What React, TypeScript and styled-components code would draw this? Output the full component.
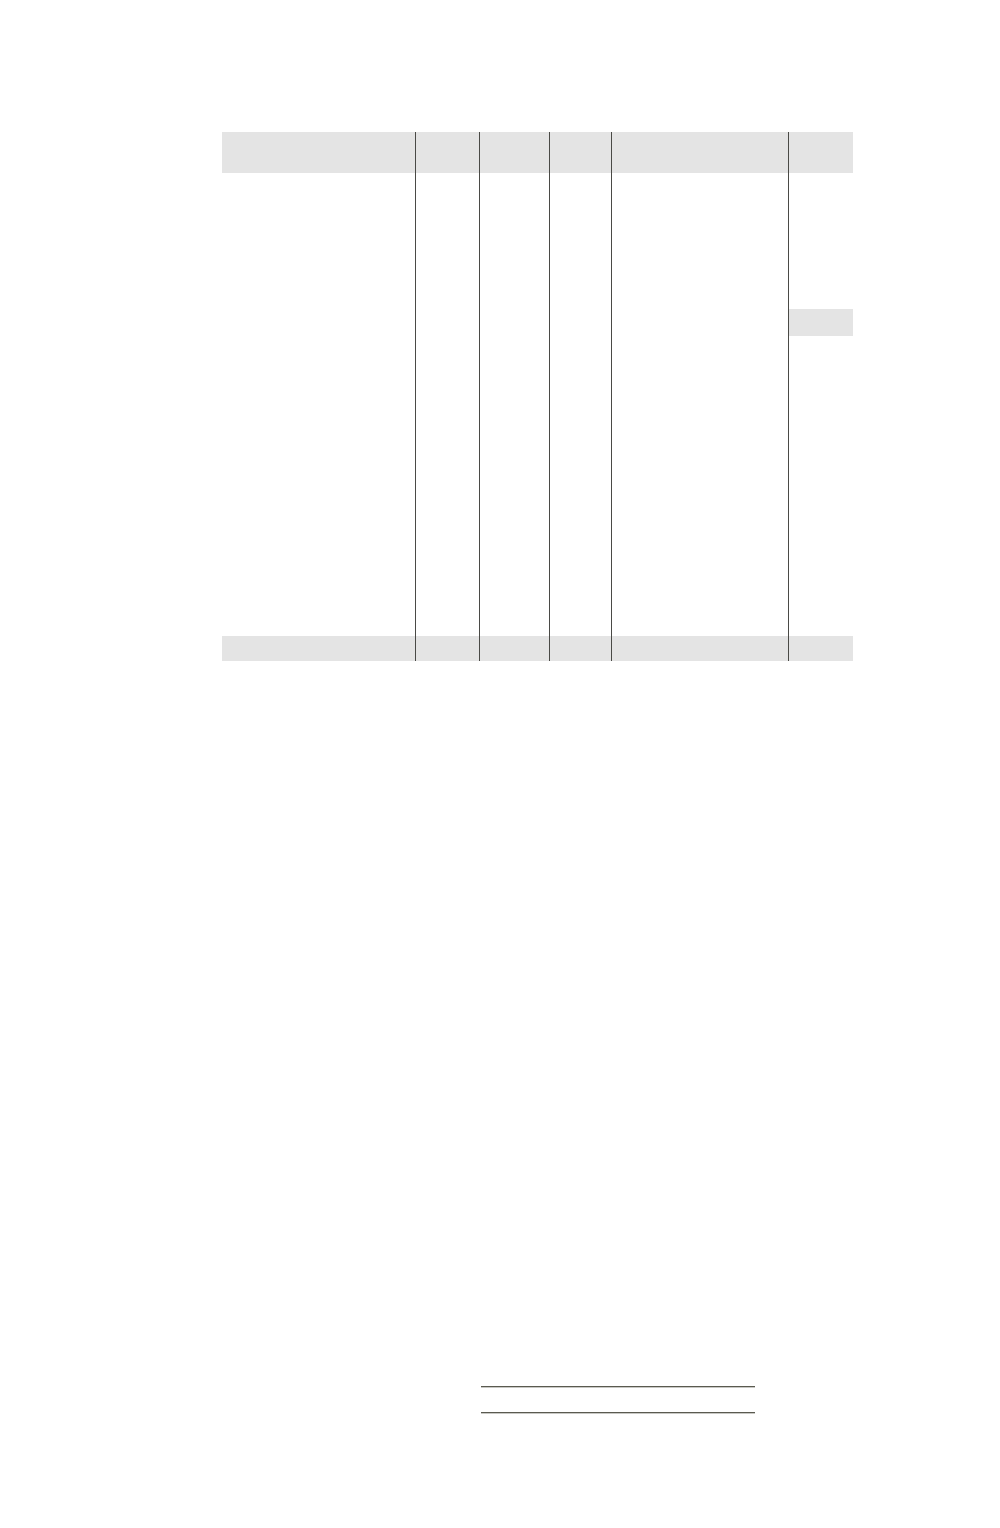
import React from "react";
import styled, { createGlobalStyle } from "styled-components";

const Global = createGlobalStyle`
  html, body {
    margin: 0;
    padding: 0;
    background: #fff;
    font-family: "Liberation Sans", Arial, sans-serif;
  }
`;

const Page = styled.div`
  width: 1000px;
  height: 1528px;
  box-sizing: border-box;
  padding: 132px 0 0 222px;
`;

const Sheet = styled.table`
  width: 631px;
  border-collapse: collapse;
  table-layout: fixed;
`;

const Cell = styled.td<{ $w?: number; $h?: number; $shade?: boolean }>`
  width: ${(p) => (p.$w ? `${p.$w}px` : "auto")};
  height: ${(p) => (p.$h ? `${p.$h}px` : "auto")};
  padding: 0;
  background: ${(p) => (p.$shade ? "#e4e4e4" : "transparent")};
  border-left: 1px solid #4a4a46;
  &:first-child {
    border-left: none;
  }
`;

const Signatures = styled.div`
  margin: 725px 0 0 259px;
  width: 274px;
  display: flex;
  flex-direction: column;
  gap: 24px;
`;

const SignLine = styled.div`
  height: 0;
  border-top: 1px solid #5a5a50;
  border-bottom: 1px solid #c8c8c4;
`;

// content widths; each column after the first also carries a 1px rule
const widths = [193, 63, 69, 61, 176, 64];

const Row = ({ h, shade, lastShade }: { h: number; shade?: boolean; lastShade?: boolean }) => (
  <tr>
    {widths.map((w, i) => (
      <Cell key={i} $w={w} $h={h} $shade={shade || (lastShade && i === widths.length - 1)} />
    ))}
  </tr>
);

export default function App() {
  return (
    <>
      <Global />
      <Page>
        <Sheet>
          <thead>
            <Row h={41} shade />
          </thead>
          <tbody>
            <Row h={136} />
            <Row h={27} lastShade />
            <Row h={300} />
          </tbody>
          <tfoot>
            <Row h={25} shade />
          </tfoot>
        </Sheet>
        <Signatures>
          <SignLine />
          <SignLine />
        </Signatures>
      </Page>
    </>
  );
}
